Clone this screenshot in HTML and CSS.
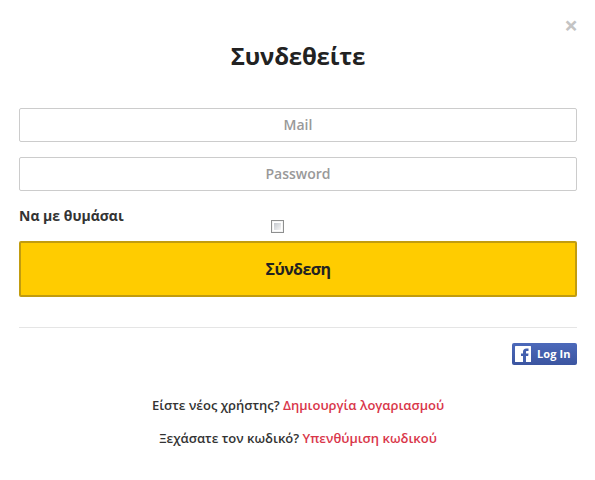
FILE: index.html
```html
<!DOCTYPE html>
<html lang="el">
<head>
    <meta charset="UTF-8">
    <meta name="viewport" content="width=device-width, initial-scale=1.0">
    <title>Συνδεθείτε</title>
    <link rel="stylesheet" href="styles.css">
</head>
<body>
    <div class="modal">
        <button class="close" type="button" aria-label="Close">×</button>
        <h2>Συνδεθείτε</h2>
        <form>
            <input class="field" type="text" placeholder="Mail">
            <input class="field" type="password" placeholder="Password">
            <div class="remember">
                <label for="remember">Να με θυμάσαι</label>
                <input class="check" id="remember" type="checkbox">
            </div>
            <button class="submit" type="submit">Σύνδεση</button>
        </form>
        <div class="social">
            <a class="facebook" href="#">
                <svg width="16" height="16" viewBox="0 0 16 16">
                    <rect width="16" height="16" rx="0.5" fill="#fff"/>
                    <path d="M8 16V10H6V7.500H8V6C8 3.800 9.200 2.500 11.400 2.500H13.500V5H12C11.200 5 11 5.300 11 6V7.500H13.500L13.200 10H11V16Z" fill="#4460ae"/>
                </svg>
                <span>Log In</span>
            </a>
        </div>
        <div class="links">
            <p>Είστε νέος χρήστης? <a href="#">Δημιουργία λογαριασμού</a></p>
            <p>Ξεχάσατε τον κωδικό? <a href="#">Υπενθύμιση κωδικού</a></p>
        </div>
    </div>
</body>
</html>
```

FILE: styles.css
```css
* {
    box-sizing: border-box;
}

body {
    margin: 0;
    background: #fff;
    color: #333;
    font-family: "Open Sans", sans-serif;
}

.modal {
    position: relative;
    height: 480px;
    padding: 38px 18px 0 19px;
}

.close {
    position: absolute;
    top: 14px;
    right: 17px;
    padding: 0;
    border: none;
    background: none;
    color: #c4c4c4;
    font: bold 24px/22px "Open Sans", sans-serif;
}

h2 {
    margin: 0 0 34px;
    color: #222;
    text-align: center;
    font-size: 24px;
    line-height: 36px;
    font-weight: 700;
    letter-spacing: -0.2px;
}

.field {
    display: block;
    width: 100%;
    height: 34px;
    margin: 0 0 15px;
    padding: 0 10px 2px;
    border: 1px solid #ccc;
    border-radius: 2px;
    text-align: center;
    font: 600 14px "Open Sans", sans-serif;
}

.field::placeholder {
    color: #999;
    opacity: 1;
}

.remember {
    display: flex;
    height: 35px;
}

.remember label {
    width: 252px;
    font-size: 14px;
    line-height: 20px;
    font-weight: 700;
}

.check {
    appearance: none;
    width: 13px;
    height: 13px;
    margin: 14px 0 0;
    border: 1px solid #8e8f8f;
    background: linear-gradient(135deg, #c4c8ce, #f6f6f6) content-box #f4f4f4;
    padding: 2px;
    box-shadow: inset 0 0 0 1px #f4f4f4;
}

.submit {
    display: block;
    width: 100%;
    height: 56px;
    padding: 0;
    border: 2px solid #c19c0f;
    border-radius: 2px;
    background: #fc0;
    color: #222;
    font: bold 16px "Open Sans", sans-serif;
    letter-spacing: -0.6px;
}

.social {
    display: flex;
    justify-content: flex-end;
    margin-top: 30px;
    padding-top: 15px;
    border-top: 1px solid #e5e5e5;
}

.facebook {
    display: flex;
    align-items: center;
    gap: 6px;
    width: 65px;
    height: 22px;
    padding-left: 3px;
    border-radius: 2px;
    background: linear-gradient(#4c69ba, #3b55a0);
    color: #fff;
    font-size: 11px;
    line-height: 14px;
    font-weight: 700;
    text-decoration: none;
    white-space: nowrap;
}

.facebook span {
    padding-bottom: 1px;
    letter-spacing: 0.1px;
}

.links {
    margin-top: 30px;
    text-align: center;
    font-size: 13px;
    line-height: 20px;
    font-weight: 600;
}

.links p {
    margin: 0 0 13px;
}

.links a {
    color: #d9364a;
    text-decoration: none;
}
```
